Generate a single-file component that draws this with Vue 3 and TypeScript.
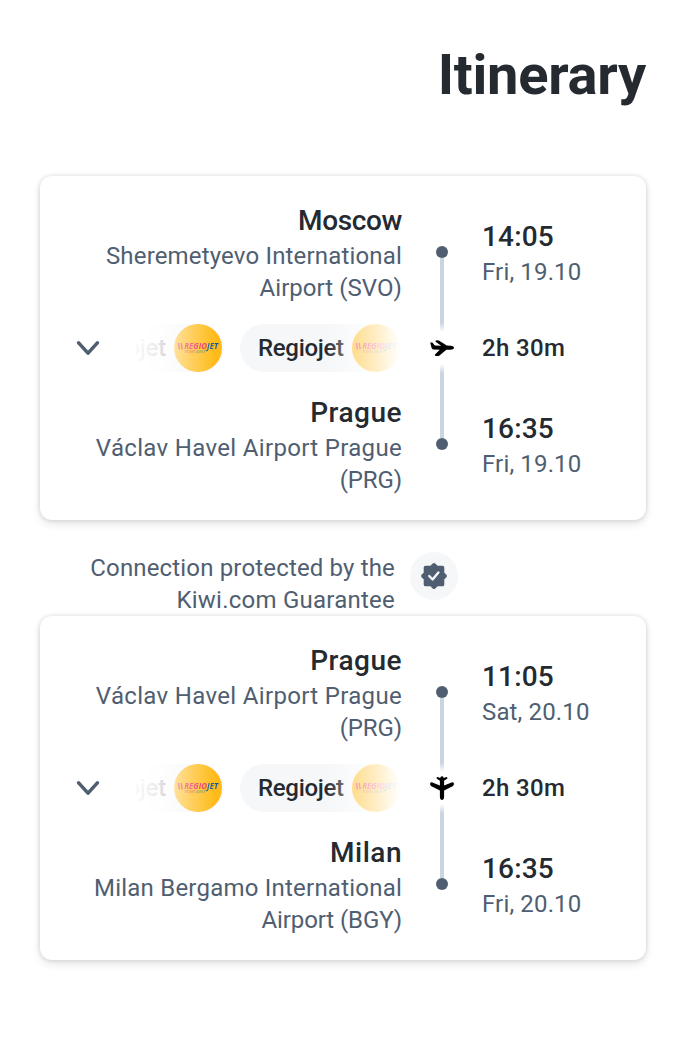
<script setup lang="ts">
interface Label {
  text: string
  tracking: number
}
interface Stop {
  city: Label
  station: Label[]
  time: string
  date: string
}
interface Segment {
  from: Stop
  to: Stop
  duration: string
  plane: 'right' | 'up'
}

const label = (text: string, tracking = 0): Label => ({ text, tracking })
const spacing = (l: Label) => ({ letterSpacing: `${l.tracking}px` })

const carriers: string[] = ['Regiojet', 'Regiojet']

const prague = {
  city: label('Prague', 0.5),
  station: [label('Václav Havel Airport Prague', 0.33), label('(PRG)', -0.1)],
}

const segments: Segment[] = [
  {
    from: {
      city: label('Moscow', -0.35),
      station: [label('Sheremetyevo International', 0.17), label('Airport (SVO)', 0.05)],
      time: '14:05',
      date: 'Fri, 19.10',
    },
    to: { ...prague, time: '16:35', date: 'Fri, 19.10' },
    duration: '2h 30m',
    plane: 'right',
  },
  {
    from: { ...prague, time: '11:05', date: 'Sat, 20.10' },
    to: {
      city: label('Milan', 0.5),
      station: [label('Milan Bergamo International', 0.22), label('Airport (BGY)', -0.1)],
      time: '16:35',
      date: 'Fri, 20.10',
    },
    duration: '2h 30m',
    plane: 'up',
  },
]

const guarantee: Label[] = [label('Connection protected by the', 0.16), label('Kiwi.com Guarantee', 0.24)]
</script>

<template>
  <main class="page">
    <h1 class="title">Itinerary</h1>
    <template v-for="(seg, i) in segments" :key="i">
      <div v-if="i > 0" class="guarantee">
        <div class="guarantee-text">
          <div v-for="l in guarantee" :key="l.text" class="muted" :style="spacing(l)">{{ l.text }}</div>
        </div>
        <span class="badge">
          <svg width="28" height="28" viewBox="0 0 28 28">
            <path
              d="M14 3 L16.8 5.6 H22.4 V11.2 L25 14 L22.4 16.8 V22.4 H16.8 L14 25 L11.2 22.4 H5.6 V16.8 L3 14 L5.6 11.2 V5.6 H11.2 Z"
              fill="#4f5e71" stroke="#4f5e71" stroke-width="3.8" stroke-linejoin="round"
            />
            <path d="M9.2 14 L12.6 17.5 L18.4 10.4" fill="none" stroke="#f5f7f9" stroke-width="2.4" stroke-linecap="round" stroke-linejoin="round" />
          </svg>
        </span>
      </div>
      <section class="card">
        <div class="place">
          <div class="city" :style="spacing(seg.from.city)">{{ seg.from.city.text }}</div>
          <div v-for="l in seg.from.station" :key="l.text" class="muted" :style="spacing(l)">{{ l.text }}</div>
        </div>
        <div class="track track-top"><i class="dot" /><i class="line line-down" /></div>
        <div class="when">
          <div class="city">{{ seg.from.time }}</div>
          <div class="muted">{{ seg.from.date }}</div>
        </div>

        <div class="middle">
          <svg class="chevron" width="28" height="20" viewBox="0 0 28 20">
            <path d="M4.6 4.9 L14 15.1 L23.4 4.9" fill="none" stroke="#4f5e71" stroke-width="3.6" stroke-linecap="round" stroke-linejoin="round" />
          </svg>
          <div class="carriers">
            <div v-for="(c, n) in carriers" :key="n" class="pill">
              <span class="pill-name">{{ c }}</span>
              <svg class="logo" width="48" height="48" viewBox="0 0 48 48">
                <circle cx="24" cy="24" r="24" fill="#ffba18" />
                <path d="M4.4 19 L5.4 25.4 M7.2 19 L8.2 25.4" stroke="#e8265c" stroke-width="1.4" />
                <text x="10.2" y="24.6" class="logo-text" textLength="34" lengthAdjust="spacingAndGlyphs"><tspan fill="#e8265c">REGIO</tspan><tspan fill="#1c5a8c">JET</tspan></text>
                <text x="10.5" y="29.3" class="logo-sub" textLength="21" lengthAdjust="spacingAndGlyphs"><tspan fill="#e8662c">STUDENT </tspan><tspan fill="#7c9450">AGENCY</tspan></text>
              </svg>
            </div>
          </div>
        </div>
        <div class="track plane">
          <svg width="24" height="24" viewBox="0 0 24 24">
            <path
              v-if="seg.plane === 'right'"
              d="M0.2 6.6 L2.4 6.6 L4.8 9.4 L11.2 9.7 L5.6 5.8 Q5.2 4.2 6.6 4.2 L8.8 4.4 L16.8 9.5 L20.8 9.8 C22.8 9.8 24 10.8 24 11.8 C24 12.8 22.8 13.7 20.8 13.7 L16.4 13.7 L9.2 19.7 Q7.6 20.3 5.2 19.8 Q4.4 19.2 5.2 18.2 L9.8 13.8 L3.7 13.6 C2 13.4 1.5 12.2 1.2 10.6 Z"
              fill="#000"
            />
            <path
              v-else
              d="M10.2 2 L10.8 0.8 C11.2 0 12.8 0 13.2 0.8 L13.8 2 L16.4 1 Q17.8 1.1 17.4 2.6 L14.1 4.8 V9.4 L22.2 6.2 Q24 6 24 8 Q23.8 9.6 22.6 10.2 L14.1 14.5 V20.5 C14.1 23.3 13 24 12 24 C11 24 9.9 23.3 9.9 20.5 V14.5 L1.4 10.2 Q0.2 9.6 0 8 Q0 6 1.8 6.2 L9.9 9.4 V4.8 L6.6 2.6 Q6.2 1.1 7.6 1 Z"
              fill="#000"
            />
          </svg>
        </div>
        <div class="when duration">{{ seg.duration }}</div>

        <div class="place">
          <div class="city" :style="spacing(seg.to.city)">{{ seg.to.city.text }}</div>
          <div v-for="l in seg.to.station" :key="l.text" class="muted" :style="spacing(l)">{{ l.text }}</div>
        </div>
        <div class="track track-bottom"><i class="line line-up" /><i class="dot" /></div>
        <div class="when">
          <div class="city">{{ seg.to.time }}</div>
          <div class="muted">{{ seg.to.date }}</div>
        </div>
      </section>
    </template>
  </main>
</template>

<style>
body {
  background: #fff;
}
</style>

<style scoped>
.page {
  box-sizing: border-box;
  height: 1048px;
  padding: 39px 40px 40px;
  font-family: Roboto, "Noto Sans", sans-serif;
  color: #252a31;
}
.title {
  margin: 0 0 65px;
  font-size: 56px;
  line-height: 72px;
  font-weight: 700;
  text-align: right;
  letter-spacing: -0.25px;
}
.card {
  box-sizing: border-box;
  height: 344px;
  padding: 24px 0;
  display: grid;
  grid-template-columns: 362px 80px 1fr;
  grid-template-rows: 104px 88px 104px;
  border-radius: 12px;
  background: #fff;
  box-shadow: 0 0 4px rgba(37, 42, 49, 0.16), 0 4px 8px rgba(37, 42, 49, 0.12);
}
.place {
  text-align: right;
}
.city {
  box-sizing: border-box;
  height: 40px;
  padding-top: 1px;
  font-size: 28px;
  line-height: 40px;
  font-weight: 500;
}
.muted {
  font-size: 24px;
  line-height: 32px;
  color: #4f5e71;
  white-space: nowrap;
}
.when {
  align-self: center;
  letter-spacing: 0.15px;
}
.duration {
  font-size: 24px;
  font-weight: 500;
  line-height: 32px;
  letter-spacing: 0.35px;
}
.track {
  display: flex;
  flex-direction: column;
  align-items: center;
}
.track-top {
  padding-top: 46px;
}
.dot {
  flex: none;
  width: 12px;
  height: 12px;
  border-radius: 50%;
  background: #4f5e71;
}
.line {
  flex: none;
  width: 4px;
  height: 74px;
}
.line-down {
  background: linear-gradient(#cbd5e1 65px, rgba(203, 213, 225, 0));
}
.line-up {
  margin-top: -28px;
  background: linear-gradient(rgba(203, 213, 225, 0), #cbd5e1 9px);
}
.plane {
  justify-content: center;
}
.plane svg {
  overflow: visible;
}
.middle {
  display: flex;
  align-items: center;
  padding-left: 34px;
}
.chevron {
  flex: none;
  margin-right: 34px;
}
.carriers {
  --fade: linear-gradient(
    to right,
    rgba(0, 0, 0, 0.03),
    rgba(0, 0, 0, 0.06) 12px,
    rgba(0, 0, 0, 0.1) 22px,
    rgba(0, 0, 0, 0.18) 28px,
    rgba(0, 0, 0, 0.45) 40px,
    rgba(0, 0, 0, 0.75) 60px,
    #000 80px,
    #000 calc(100% - 76px),
    rgba(0, 0, 0, 0.72) calc(100% - 61px),
    rgba(0, 0, 0, 0.48) calc(100% - 48px),
    rgba(0, 0, 0, 0.25) calc(100% - 26px),
    rgba(0, 0, 0, 0.08) calc(100% - 10px),
    transparent
  );
  flex: 1;
  min-width: 0;
  display: flex;
  justify-content: flex-end;
  gap: 16px;
  overflow: hidden;
  -webkit-mask-image: var(--fade);
  mask-image: var(--fade);
}
.pill {
  box-sizing: border-box;
  flex: none;
  width: 162px;
  height: 48px;
  padding: 0 2px 0 18px;
  display: flex;
  align-items: center;
  justify-content: space-between;
  border-radius: 24px;
  background: #f5f7f9;
}
.pill-name {
  font-size: 24px;
  line-height: 32px;
  font-weight: 500;
  letter-spacing: -0.3px;
}
.logo {
  flex: none;
}
.logo-text {
  font: italic 700 8px "Open Sans", sans-serif;
}
.logo-sub {
  font: 700 2.6px "Open Sans", sans-serif;
}
.guarantee {
  box-sizing: border-box;
  height: 96px;
  padding-top: 32px;
  display: flex;
  align-items: flex-start;
}
.guarantee-text {
  width: 355px;
  margin-right: 15px;
  text-align: right;
}
.badge {
  width: 48px;
  height: 48px;
  border-radius: 50%;
  background: #f5f7f9;
  display: flex;
  align-items: center;
  justify-content: center;
}
</style>
